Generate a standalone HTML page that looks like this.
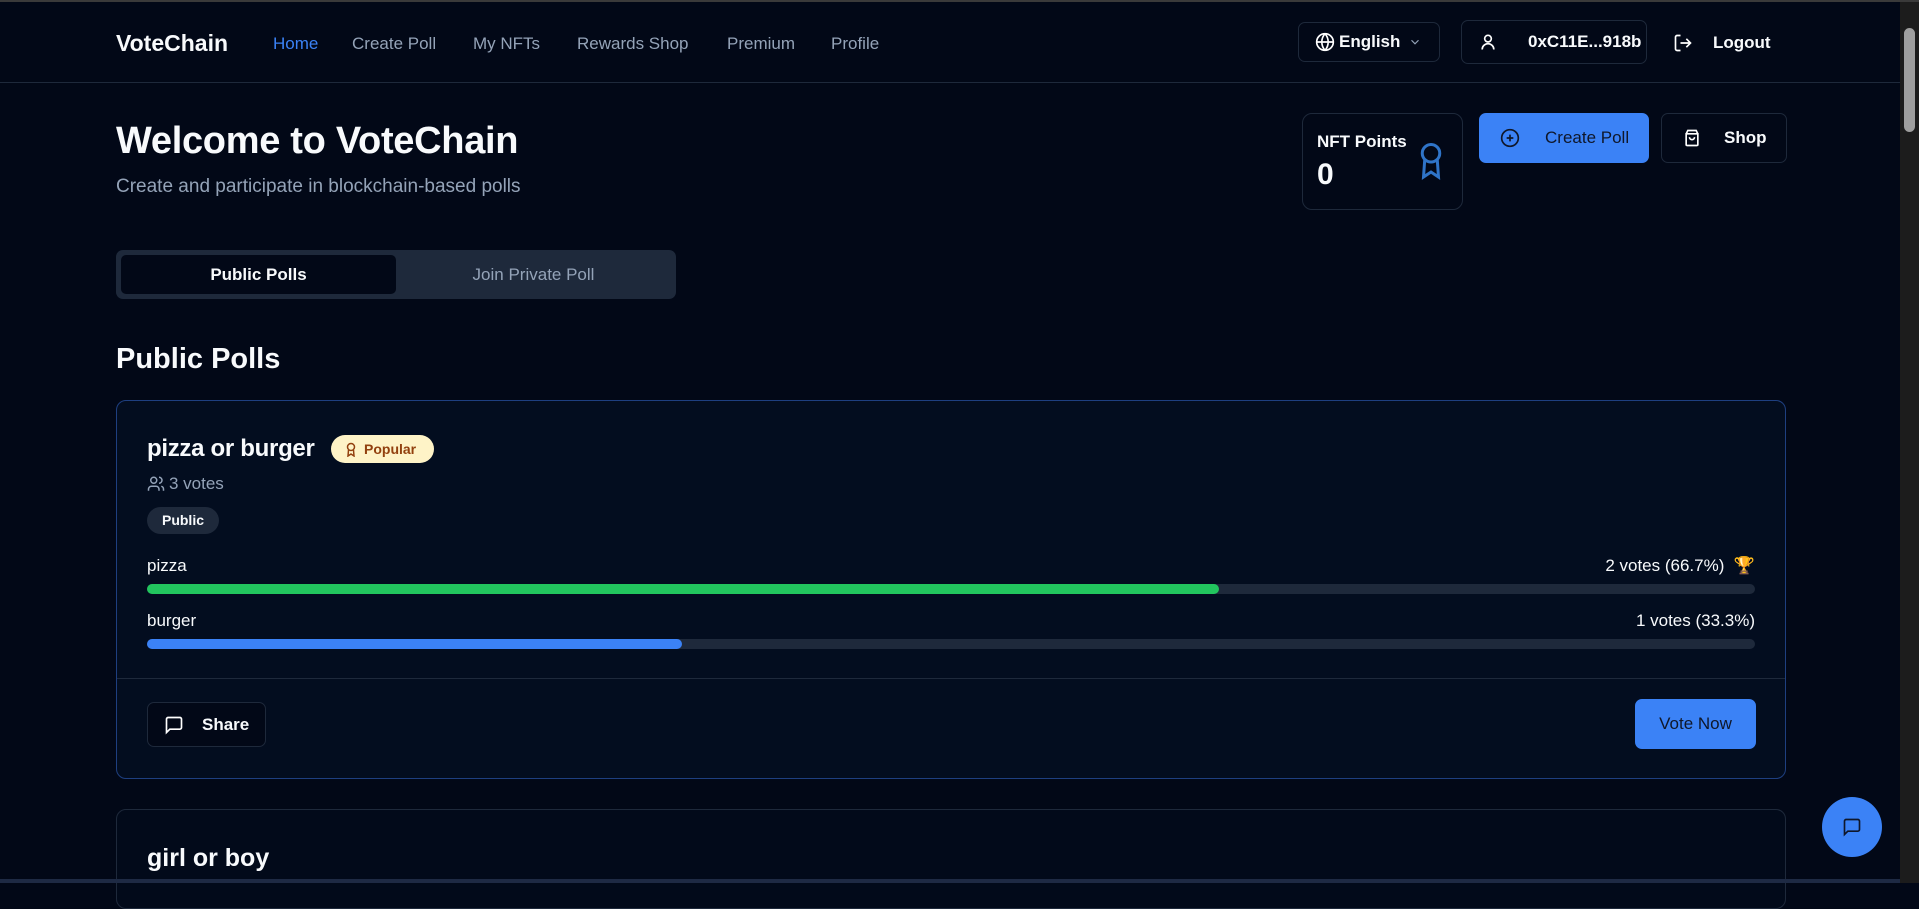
<!DOCTYPE html>
<html><head><meta charset="utf-8"><style>
*{box-sizing:border-box;margin:0;padding:0}
body{width:1919px;height:883px;overflow:hidden;background:#020817;font-family:"Liberation Sans",sans-serif;color:#f8fafc;position:relative}
.top{position:absolute;left:0;top:0;width:1919px;height:2px;background:#3a3a3a}
.nav{position:absolute;left:0;top:2px;width:1900px;height:81px;border-bottom:1px solid #1e293b}
.abs{position:absolute}
.logo{left:116px;top:28px;font-size:23px;font-weight:bold}
.nl{top:32px;font-size:17px;color:#94a3b8}
.btn{position:absolute;border:1px solid #1e293b;border-radius:7px;display:flex;align-items:center}
.sb{position:absolute;right:0;top:2px;width:19px;height:881px;background:#1c1c1c}
.sb .th{position:absolute;left:4px;top:26px;width:11px;height:104px;background:#9e9e9e;border-radius:6px}
.card{position:absolute;left:116px;width:1670px;border-radius:10px;background:#030d1f}
</style></head><body>
<div class="top"></div>
<div class="nav">
<div class="abs logo">VoteChain</div>
<div class="abs nl" style="left:273px;color:#3b82f6">Home</div>
<div class="abs nl" style="left:352px">Create Poll</div>
<div class="abs nl" style="left:473px">My NFTs</div>
<div class="abs nl" style="left:577px">Rewards Shop</div>
<div class="abs nl" style="left:727px">Premium</div>
<div class="abs nl" style="left:831px">Profile</div>
<div class="btn" style="left:1298px;top:20px;width:142px;height:40px;padding-left:16px;font-size:17px;font-weight:bold">
<svg width="20" height="20" viewBox="0 0 24 24" fill="none" stroke="#fff" stroke-width="2"><circle cx="12" cy="12" r="10"/><path d="M2 12h20M12 2a15 15 0 0 1 0 20M12 2a15 15 0 0 0 0 20"/></svg>
<span style="margin-left:4px">English</span>
<svg style="margin-left:8px" width="14" height="14" viewBox="0 0 24 24" fill="none" stroke="#94a3b8" stroke-width="2"><path d="M6 9l6 6 6-6"/></svg></div>
<div class="btn" style="left:1461px;top:18px;width:186px;height:44px;padding-left:16px;font-size:17px;font-weight:bold">
<svg width="20" height="20" viewBox="0 0 24 24" fill="none" stroke="#fff" stroke-width="2"><circle cx="12" cy="8" r="4"/><path d="M5 21a7 7 0 0 1 14 0"/></svg>
<span style="margin-left:30px">0xC11E...918b</span></div>
<svg class="abs" style="left:1673px;top:31px" width="20" height="20" viewBox="0 0 24 24" fill="none" stroke="#fff" stroke-width="2"><path d="M9 21H5a2 2 0 0 1-2-2V5a2 2 0 0 1 2-2h4M16 17l5-5-5-5M21 12H9"/></svg>
<div class="abs" style="left:1713px;top:31px;font-size:17px;font-weight:bold">Logout</div>
</div>
<div class="abs" style="left:116px;top:120px;font-size:38px;font-weight:bold;letter-spacing:-0.3px">Welcome to VoteChain</div>
<div class="abs" style="left:116px;top:176px;font-size:19px;color:#94a3b8">Create and participate in blockchain-based polls</div>
<div class="btn" style="left:1302px;top:113px;width:161px;height:97px;border-radius:10px;display:block">
<div class="abs" style="left:14px;top:18px;font-size:17px;font-weight:bold">NFT Points</div>
<div class="abs" style="left:14px;top:44px;font-size:30px;font-weight:bold">0</div>
<svg class="abs" style="left:113px;top:28px" width="30" height="40" viewBox="0 0 24 32" fill="none" stroke="#2f74c8" stroke-width="2.4"><circle cx="12" cy="9" r="7"/><path d="M7 14l-1 14 6-4 6 4-1-14"/></svg>
</div>
<div class="btn" style="left:1479px;top:113px;width:170px;height:50px;background:#3b82f6;border-color:#3b82f6;color:#0f172a;font-size:17px;padding-left:20px">
<svg width="20" height="20" viewBox="0 0 24 24" fill="none" stroke="#0f172a" stroke-width="2"><circle cx="12" cy="12" r="10"/><path d="M12 8v8M8 12h8"/></svg><span style="margin-left:25px">Create Poll</span></div>
<div class="btn" style="left:1661px;top:113px;width:126px;height:50px;font-size:17px;font-weight:bold;padding-left:20px">
<svg width="20" height="20" viewBox="0 0 24 24" fill="none" stroke="#fff" stroke-width="2"><path d="M5 7h14v13a1 1 0 0 1-1 1H6a1 1 0 0 1-1-1z"/><path d="M5 7l2-4h10l2 4M9 11a3 3 0 0 0 6 0"/></svg><span style="margin-left:22px">Shop</span></div>
<div class="abs" style="left:116px;top:250px;width:560px;height:49px;background:#1e293b;border-radius:7px">
<div class="abs" style="left:5px;top:5px;width:275px;height:39px;background:#020817;border-radius:5px;text-align:center;line-height:39px;font-size:17px;font-weight:bold">Public Polls</div>
<div class="abs" style="left:280px;top:5px;width:275px;height:39px;text-align:center;line-height:39px;font-size:17px;color:#94a3b8">Join Private Poll</div>
</div>
<div class="abs" style="left:116px;top:343px;font-size:29px;font-weight:bold">Public Polls</div>
<div class="card" style="top:400px;height:379px;border:1px solid #1e3f80">
<div class="abs" style="left:30px;top:34px;font-size:24px;font-weight:bold;letter-spacing:-0.3px">pizza or burger</div>
<div class="abs" style="left:214px;top:34px;width:103px;height:28px;border-radius:14px;background:#fef3c7;color:#92400e;font-size:14px;font-weight:bold;line-height:28px;padding-left:33px">Popular
<svg class="abs" style="left:14px;top:7px" width="12" height="15" viewBox="0 0 12 15" fill="none" stroke="#92400e" stroke-width="1.5"><circle cx="6" cy="5" r="3.5"/><path d="M3.5 8l-.5 6 3-2 3 2-.5-6"/></svg></div>
<svg class="abs" style="left:30px;top:74px" width="18" height="18" viewBox="0 0 24 24" fill="none" stroke="#94a3b8" stroke-width="2"><circle cx="9" cy="7" r="4"/><path d="M2 21v-2a4 4 0 0 1 4-4h6a4 4 0 0 1 4 4v2M16 3a4 4 0 0 1 0 8M22 21v-2a4 4 0 0 0-3-3.9"/></svg>
<div class="abs" style="left:52px;top:73px;font-size:17px;color:#94a3b8">3 votes</div>
<div class="abs" style="left:30px;top:106px;width:72px;height:27px;border-radius:14px;background:#1e293b;font-size:14px;font-weight:bold;line-height:27px;text-align:center">Public</div>
<div class="abs" style="left:30px;top:155px;font-size:17px">pizza</div>
<div class="abs" style="right:30px;top:155px;font-size:17px">2 votes (66.7%) &nbsp;🏆</div>
<div class="abs" style="left:30px;top:183px;width:1608px;height:10px;border-radius:5px;background:#1e293b"><div style="width:1072px;height:10px;border-radius:5px;background:#22c55e"></div></div>
<div class="abs" style="left:30px;top:210px;font-size:17px">burger</div>
<div class="abs" style="right:30px;top:210px;font-size:17px">1 votes (33.3%)</div>
<div class="abs" style="left:30px;top:238px;width:1608px;height:10px;border-radius:5px;background:#1e293b"><div style="width:535px;height:10px;border-radius:5px;background:#3b82f6"></div></div>
<div class="abs" style="left:0;top:277px;width:1668px;height:1px;background:#1e293b"></div>
<div class="btn" style="left:30px;top:301px;width:119px;height:45px;background:#020817;font-size:17px;font-weight:bold;padding-left:16px">
<svg width="20" height="20" viewBox="0 0 24 24" fill="none" stroke="#fff" stroke-width="2"><path d="M21 15a2 2 0 0 1-2 2H7l-4 4V5a2 2 0 0 1 2-2h14a2 2 0 0 1 2 2z"/></svg><span style="margin-left:18px">Share</span></div>
<div class="btn" style="left:1518px;top:298px;width:121px;height:50px;background:#3b82f6;border-color:#3b82f6;color:#0f172a;font-size:17px;justify-content:center">Vote Now</div>
</div>
<div class="card" style="top:809px;height:100px;border:1px solid #1e293b;background:#020a1a">
<div class="abs" style="left:30px;top:34px;font-size:25px;font-weight:bold">girl or boy</div>
</div>
<div class="abs" style="left:1822px;top:797px;width:60px;height:60px;border-radius:50%;background:#3b82f6">
<svg class="abs" style="left:20px;top:20px" width="20" height="20" viewBox="0 0 24 24" fill="none" stroke="#0f172a" stroke-width="2"><path d="M21 15a2 2 0 0 1-2 2H7l-4 4V5a2 2 0 0 1 2-2h14a2 2 0 0 1 2 2z"/></svg></div>
<div class="sb"><div class="th"></div></div>
<div class="abs" style="left:0;top:879px;width:1900px;height:4px;background:#1e2a44"></div>
</body></html>
